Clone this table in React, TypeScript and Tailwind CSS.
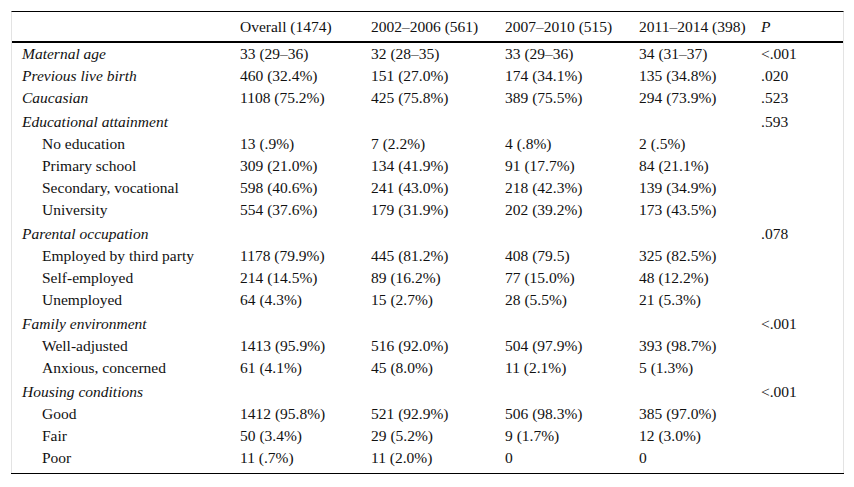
import * as React from "react";

type Row = {
  label: string;
  kind: "main" | "group" | "sub";
  values?: string[];
  p?: string;
};

const rows: Row[] = [
  { label: "Maternal age", kind: "main", values: ["33 (29–36)", "32 (28–35)", "33 (29–36)", "34 (31–37)"], p: "<.001" },
  { label: "Previous live birth", kind: "main", values: ["460 (32.4%)", "151 (27.0%)", "174 (34.1%)", "135 (34.8%)"], p: ".020" },
  { label: "Caucasian", kind: "main", values: ["1108 (75.2%)", "425 (75.8%)", "389 (75.5%)", "294 (73.9%)"], p: ".523" },
  { label: "Educational attainment", kind: "group", p: ".593" },
  { label: "No education", kind: "sub", values: ["13 (.9%)", "7 (2.2%)", "4 (.8%)", "2 (.5%)"] },
  { label: "Primary school", kind: "sub", values: ["309 (21.0%)", "134 (41.9%)", "91 (17.7%)", "84 (21.1%)"] },
  { label: "Secondary, vocational", kind: "sub", values: ["598 (40.6%)", "241 (43.0%)", "218 (42.3%)", "139 (34.9%)"] },
  { label: "University", kind: "sub", values: ["554 (37.6%)", "179 (31.9%)", "202 (39.2%)", "173 (43.5%)"] },
  { label: "Parental occupation", kind: "group", p: ".078" },
  { label: "Employed by third party", kind: "sub", values: ["1178 (79.9%)", "445 (81.2%)", "408 (79.5)", "325 (82.5%)"] },
  { label: "Self-employed", kind: "sub", values: ["214 (14.5%)", "89 (16.2%)", "77 (15.0%)", "48 (12.2%)"] },
  { label: "Unemployed", kind: "sub", values: ["64 (4.3%)", "15 (2.7%)", "28 (5.5%)", "21 (5.3%)"] },
  { label: "Family environment", kind: "group", p: "<.001" },
  { label: "Well-adjusted", kind: "sub", values: ["1413 (95.9%)", "516 (92.0%)", "504 (97.9%)", "393 (98.7%)"] },
  { label: "Anxious, concerned", kind: "sub", values: ["61 (4.1%)", "45 (8.0%)", "11 (2.1%)", "5 (1.3%)"] },
  { label: "Housing conditions", kind: "group", p: "<.001" },
  { label: "Good", kind: "sub", values: ["1412 (95.8%)", "521 (92.9%)", "506 (98.3%)", "385 (97.0%)"] },
  { label: "Fair", kind: "sub", values: ["50 (3.4%)", "29 (5.2%)", "9 (1.7%)", "12 (3.0%)"] },
  { label: "Poor", kind: "sub", values: ["11 (.7%)", "11 (2.0%)", "0", "0"] },
];

const grid = "grid grid-cols-[218px_131px_134px_134px_122px_93px]";

export default function App() {
  return (
    <div className="min-h-[487px] w-[854px] bg-white pt-[11px] font-['Liberation_Serif','Times_New_Roman',serif] text-[15.5px] text-[#111]">
      <div className="ml-[11px] w-[833px] border-x border-t border-x-[#e3e3e3] border-t-black">
        <div className={`${grid} h-[31px] items-center border-b-2 border-black`}>
          <div />
          <div className="pl-[10px]">Overall (1474)</div>
          <div className="pl-[10px]">2002–2006 (561)</div>
          <div className="pl-[10px]">2007–2010 (515)</div>
          <div className="pl-[10px]">2011–2014 (398)</div>
          <div className="pl-[10px] italic">P</div>
        </div>
        <div className="pb-[4px]">
          {rows.map((r) => (
            <div
              key={r.label}
              className={`${grid} items-center leading-[22px] ${r.kind === "group" ? "pt-[2px]" : ""}`}
            >
              <div className={r.kind === "sub" ? "pl-[30px]" : "pl-[10px] italic"}>{r.label}</div>
              {[0, 1, 2, 3].map((i) => (
                <div key={i} className="pl-[10px]">
                  {r.values ? r.values[i] : ""}
                </div>
              ))}
              <div className="pl-[10px]">{r.p ?? ""}</div>
            </div>
          ))}
        </div>
      </div>
      <div className="ml-[11px] h-px w-[833px] bg-black" />
    </div>
  );
}
